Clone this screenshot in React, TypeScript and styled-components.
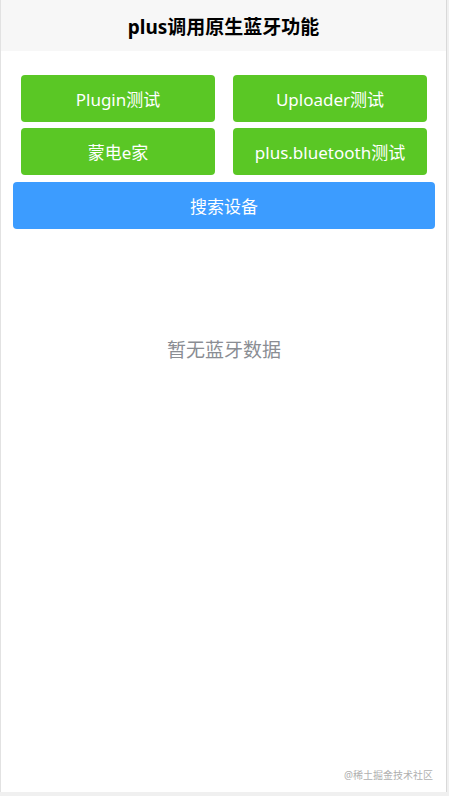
import styled, { createGlobalStyle } from "styled-components";

const GlobalStyle = createGlobalStyle`
  html, body {
    margin: 0;
    padding: 0;
    background: #f0f0f0;
  }
  * {
    box-sizing: border-box;
  }
`;

const Page = styled.div`
  width: 447px;
  height: 792px;
  background: #ffffff;
  border-left: 1px solid #e2e2e2;
  border-right: 1px solid #d9d9d9;
  display: flex;
  flex-direction: column;
  font-family: "Noto Sans", "Noto Sans CJK SC", sans-serif;
  position: relative;
`;

const NavBar = styled.div`
  height: 51px;
  background: #f7f7f7;
  display: flex;
  align-items: center;
  justify-content: center;
`;

const Title = styled.h1`
  margin: 0;
  font-size: 19px;
  font-weight: 700;
  color: #000;
`;

const Body = styled.div`
  padding: 24px 11px 0 12px;
  display: flex;
  flex-direction: column;
  gap: 7px;
  flex: 1;
`;

const Grid = styled.div`
  display: grid;
  grid-template-columns: 194px 194px;
  justify-content: space-between;
  row-gap: 6px;
  padding: 0 8px 0 8px;
`;

const Button = styled.button<{ $tone: "green" | "blue" }>`
  height: 47px;
  border: none;
  border-radius: 4px;
  background: ${(p) => (p.$tone === "green" ? "#5ac725" : "#3c9cff")};
  color: #fff;
  font-family: inherit;
  font-size: 17px;
  display: flex;
  align-items: center;
  justify-content: center;
  padding: 0;
`;

const Empty = styled.div`
  margin-top: 99px;
  text-align: center;
  font-size: 19px;
  color: #8a8d93;
`;

const Watermark = styled.div`
  position: absolute;
  right: 13px;
  bottom: 10px;
  font-size: 10px;
  color: #b0b0b0;
`;

export default function App() {
  return (
    <>
      <GlobalStyle />
      <Page>
        <NavBar>
          <Title>plus调用原生蓝牙功能</Title>
        </NavBar>
        <Body>
          <Grid>
            <Button $tone="green">Plugin测试</Button>
            <Button $tone="green">Uploader测试</Button>
            <Button $tone="green">蒙电e家</Button>
            <Button $tone="green">plus.bluetooth测试</Button>
          </Grid>
          <Button $tone="blue">搜索设备</Button>
          <Empty>暂无蓝牙数据</Empty>
        </Body>
        <Watermark>@稀土掘金技术社区</Watermark>
      </Page>
    </>
  );
}
